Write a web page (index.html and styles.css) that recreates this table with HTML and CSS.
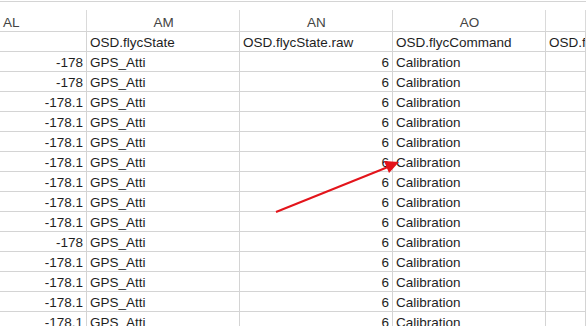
FILE: index.html
```html
<!DOCTYPE html>
<html>
<head>
<meta charset="utf-8">
<link rel="stylesheet" href="styles.css">
</head>
<body>
<div class="sheet">
  <div class="grid">
    <div class="hd">AL</div><div class="hd c">AM</div><div class="hd c">AN</div><div class="hd c">AO</div><div class="hd"></div>
    <div class="cell"></div><div class="cell">OSD.flycState</div><div class="cell">OSD.flycState.raw</div><div class="cell">OSD.flycCommand</div><div class="cell">OSD.flycCommand</div>
    <div class="cell r">-178</div><div class="cell">GPS_Atti</div><div class="cell r">6</div><div class="cell">Calibration</div><div class="cell"></div>
    <div class="cell r">-178</div><div class="cell">GPS_Atti</div><div class="cell r">6</div><div class="cell">Calibration</div><div class="cell"></div>
    <div class="cell r">-178.1</div><div class="cell">GPS_Atti</div><div class="cell r">6</div><div class="cell">Calibration</div><div class="cell"></div>
    <div class="cell r">-178.1</div><div class="cell">GPS_Atti</div><div class="cell r">6</div><div class="cell">Calibration</div><div class="cell"></div>
    <div class="cell r">-178.1</div><div class="cell">GPS_Atti</div><div class="cell r">6</div><div class="cell">Calibration</div><div class="cell"></div>
    <div class="cell r">-178.1</div><div class="cell">GPS_Atti</div><div class="cell r">6</div><div class="cell">Calibration</div><div class="cell"></div>
    <div class="cell r">-178.1</div><div class="cell">GPS_Atti</div><div class="cell r">6</div><div class="cell">Calibration</div><div class="cell"></div>
    <div class="cell r">-178.1</div><div class="cell">GPS_Atti</div><div class="cell r">6</div><div class="cell">Calibration</div><div class="cell"></div>
    <div class="cell r">-178.1</div><div class="cell">GPS_Atti</div><div class="cell r">6</div><div class="cell">Calibration</div><div class="cell"></div>
    <div class="cell r">-178</div><div class="cell">GPS_Atti</div><div class="cell r">6</div><div class="cell">Calibration</div><div class="cell"></div>
    <div class="cell r">-178.1</div><div class="cell">GPS_Atti</div><div class="cell r">6</div><div class="cell">Calibration</div><div class="cell"></div>
    <div class="cell r">-178.1</div><div class="cell">GPS_Atti</div><div class="cell r">6</div><div class="cell">Calibration</div><div class="cell"></div>
    <div class="cell r">-178.1</div><div class="cell">GPS_Atti</div><div class="cell r">6</div><div class="cell">Calibration</div><div class="cell"></div>
    <div class="cell r">-178.1</div><div class="cell">GPS_Atti</div><div class="cell r">6</div><div class="cell">Calibration</div><div class="cell"></div>
  </div>
  <svg class="arrow" width="586" height="326" viewBox="0 0 586 326">
    <line x1="276" y1="212" x2="388" y2="167" stroke="#e3141b" stroke-width="2"/>
    <polygon points="399,162 384,161 389,173" fill="#e3141b"/>
  </svg>
</div>
</body>
</html>
```

FILE: styles.css
```css
html, body {
  margin: 0;
  padding: 0;
  background: #fff;
}
.sheet {
  position: relative;
  width: 586px;
  height: 326px;
  overflow: hidden;
  padding-top: 1px;
  box-sizing: border-box;
}
.grid {
  display: grid;
  grid-template-columns: 87px 153px 153px 153px 40px;
  grid-auto-rows: 20px;
  grid-template-rows: 30px;
  border-top: 1px solid #d4d4d4;
  font-family: "Liberation Sans", Arial, sans-serif;
  font-size: 13.5px;
  color: #1e1e1e;
}
.hd {
  box-sizing: border-box;
  border-bottom: 1px solid #d4d4d4;
  background: linear-gradient(#dadada, #dadada) no-repeat right bottom / 1px 21px;
  color: #444;
  font-size: 13.5px;
  padding: 13px 0 0 3px;
  white-space: nowrap;
  overflow: hidden;
}
.hd.c {
  text-align: center;
  padding-left: 0;
}
.cell {
  box-sizing: border-box;
  border-right: 1px solid #d4d4d4;
  border-bottom: 1px solid #d4d4d4;
  padding: 3px 3px 0 3px;
  white-space: nowrap;
  overflow: hidden;
  line-height: 15px;
}
.cell.r {
  text-align: right;
}
.arrow {
  position: absolute;
  left: 0;
  top: 0;
  pointer-events: none;
}
```
